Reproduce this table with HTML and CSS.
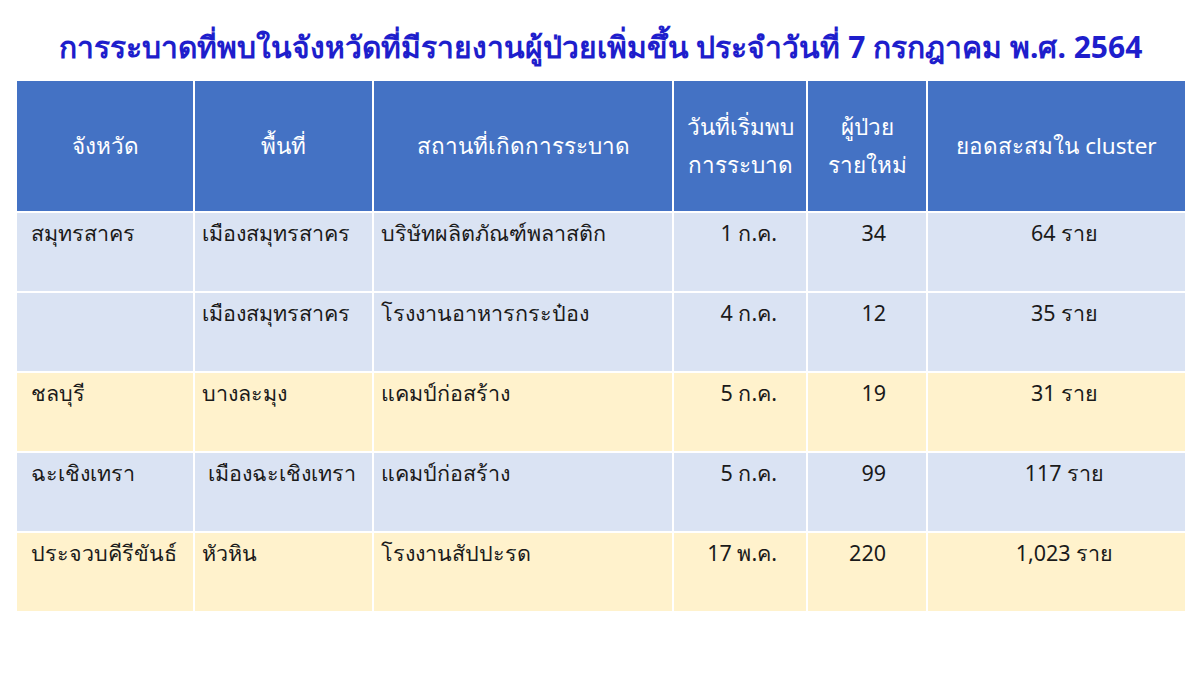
FILE: index.html
```html
<!DOCTYPE html>
<html lang="th">
<head>
<meta charset="utf-8">
<link rel="stylesheet" href="styles.css">
</head>
<body>
<div class="page">
  <h1 class="title">การระบาดที่พบในจังหวัดที่มีรายงานผู้ป่วยเพิ่มขึ้น ประจำวันที่ 7 กรกฎาคม พ.ศ. 2564</h1>
  <div class="grid">
    <div class="hd">จังหวัด</div>
    <div class="hd">พื้นที่</div>
    <div class="hd">สถานที่เกิดการระบาด</div>
    <div class="hd">วันที่เริ่มพบ<br>การระบาด</div>
    <div class="hd">ผู้ป่วย<br>รายใหม่</div>
    <div class="hd">ยอดสะสมใน cluster</div>

    <div class="c blue prov">สมุทรสาคร</div>
    <div class="c blue area">เมืองสมุทรสาคร</div>
    <div class="c blue place">บริษัทผลิตภัณฑ์พลาสติก</div>
    <div class="c blue date">1 ก.ค.</div>
    <div class="c blue num">34</div>
    <div class="c blue total">64 ราย</div>

    <div class="c blue prov"></div>
    <div class="c blue area">เมืองสมุทรสาคร</div>
    <div class="c blue place">โรงงานอาหารกระป๋อง</div>
    <div class="c blue date">4 ก.ค.</div>
    <div class="c blue num">12</div>
    <div class="c blue total">35 ราย</div>

    <div class="c yellow prov">ชลบุรี</div>
    <div class="c yellow area">บางละมุง</div>
    <div class="c yellow place">แคมป์ก่อสร้าง</div>
    <div class="c yellow date">5 ก.ค.</div>
    <div class="c yellow num">19</div>
    <div class="c yellow total">31 ราย</div>

    <div class="c blue prov">ฉะเชิงเทรา</div>
    <div class="c blue area indent">เมืองฉะเชิงเทรา</div>
    <div class="c blue place">แคมป์ก่อสร้าง</div>
    <div class="c blue date">5 ก.ค.</div>
    <div class="c blue num">99</div>
    <div class="c blue total">117 ราย</div>

    <div class="c yellow prov">ประจวบคีรีขันธ์</div>
    <div class="c yellow area">หัวหิน</div>
    <div class="c yellow place">โรงงานสัปปะรด</div>
    <div class="c yellow date">17 พ.ค.</div>
    <div class="c yellow num">220</div>
    <div class="c yellow total">1,023 ราย</div>
  </div>
</div>
</body>
</html>
```

FILE: styles.css
```css
html, body {
  margin: 0;
  padding: 0;
  background: #ffffff;
}

.page {
  width: 1200px;
  height: 675px;
  padding: 0 16px 0 17px;
  box-sizing: border-box;
  font-family: "Noto Sans", "DejaVu Sans", sans-serif;
}

.title {
  margin: 0;
  padding-top: 28px;
  height: 51px;
  box-sizing: border-box;
  text-align: center;
  color: #1e1ecc;
  font-size: 30px;
  font-weight: bold;
  line-height: 38px;
  white-space: nowrap;
}

.grid {
  display: grid;
  grid-template-columns: 176px 177px 298px 132px 118px 257px;
  grid-template-rows: 130px repeat(5, 78px);
  gap: 2px;
  margin-top: 30px;
}

.hd {
  background: #4472c4;
  color: #ffffff;
  font-size: 22.5px;
  line-height: 38px;
  display: flex;
  align-items: center;
  justify-content: center;
  text-align: center;
}

.c {
  font-size: 21.5px;
  color: #1a1a1a;
  padding-top: 4px;
  line-height: 32px;
  box-sizing: border-box;
}

.blue { background: #dae3f3; }
.yellow { background: #fff2cc; }

.prov { padding-left: 14px; }
.area { padding-left: 7px; }
.area.indent { padding-left: 13px; }
.place { padding-left: 7px; }
.date { text-align: right; padding-right: 29px; }
.num { text-align: right; padding-right: 40px; }
.total { text-align: center; padding-left: 16px; }
```
